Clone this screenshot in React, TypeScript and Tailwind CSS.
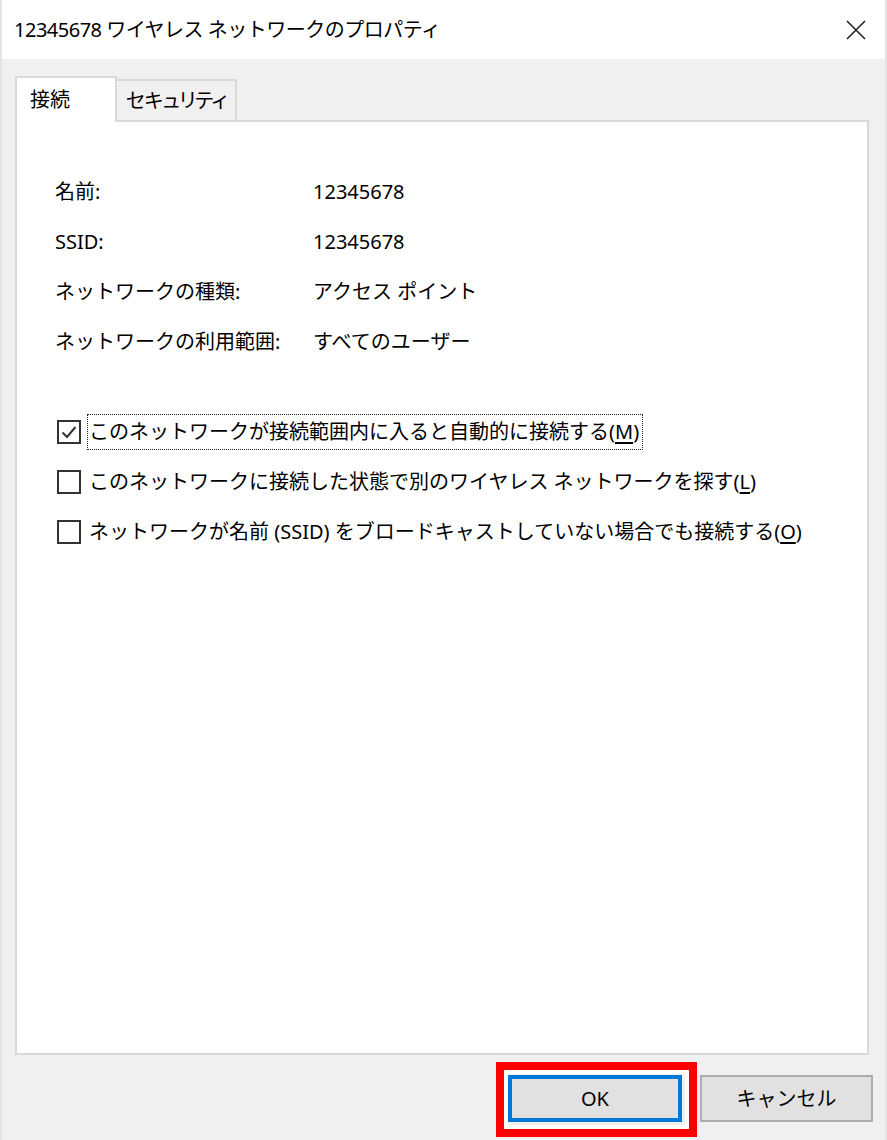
import React from "react";

const font = "font-['Noto_Sans','Noto_Sans_CJK_JP',sans-serif]";

function CheckRow({ checked, text, mn, focused }: { checked?: boolean; text: string; mn: string; focused?: boolean }) {
  return (
    <div className="flex items-center h-[50px]">
      <div className="w-[24px] h-[24px] border-2 border-[#333] bg-white flex items-center justify-center shrink-0">
        {checked && (
          <svg width="18" height="18" viewBox="0 0 18 18">
            <path d="M2.5 9.5 L7 14 L15.5 4" fill="none" stroke="#333" strokeWidth="2" />
          </svg>
        )}
      </div>
      <div
        className={
          "ml-[6px] pl-[1px] pr-[3px] leading-[34px] whitespace-nowrap " +
          (focused ? "border border-dotted border-[#222]" : "border border-transparent")
        }
      >
        {text}(<span className="underline underline-offset-[3px]">{mn}</span>)
      </div>
    </div>
  );
}

export default function App() {
  const rows: [string, string][] = [
    ["名前:", "12345678"],
    ["SSID:", "12345678"],
    ["ネットワークの種類:", "アクセス ポイント"],
    ["ネットワークの利用範囲:", "すべてのユーザー"],
  ];
  return (
    <div className={"w-[887px] h-[1140px] flex flex-col bg-white border-x-2 border-[#e3e3e3] text-[20px] text-black " + font}>
      <div className="h-[59px] bg-white flex items-center justify-between pl-[12px] pr-[18px]">
        <div className="tracking-[-0.5px] whitespace-nowrap">12345678 ワイヤレス ネットワークのプロパティ</div>
        <svg width="22" height="22" viewBox="0 0 22 22">
          <path d="M2 2 L20 20 M20 2 L2 20" stroke="#222" strokeWidth="1.6" fill="none" />
        </svg>
      </div>
      <div className="flex-1 bg-[#f0f0f0] flex flex-col pl-[13px] pr-[16px] pt-[17px]">
        <div className="flex items-end">
          <div className="relative z-10 -mb-[2px] h-[46px] w-[102px] bg-white border-2 border-b-0 border-[#d9d9d9] flex items-center pl-[13px] whitespace-nowrap">
            接続
          </div>
          <div className="h-[42px] w-[120px] bg-[#f0f0f0] border-2 border-b-0 border-l-0 border-[#d9d9d9] flex items-center pl-[9px] -mb-[1px] whitespace-nowrap [font-feature-settings:'palt'] tracking-[-0.5px]">
            セキュリティ
          </div>
        </div>
        <div className="h-[935px] bg-white border-2 border-[#d9d9d9] pl-[38px] pt-[45px]">
          {rows.map(([l, v]) => (
            <div key={l} className="flex h-[50px] items-center">
              <div className="w-[258px] whitespace-nowrap">{l}</div>
              <div className="whitespace-nowrap">{v}</div>
            </div>
          ))}
          <div className="mt-[40px] pl-[2px]">
            <CheckRow checked focused text="このネットワークが接続範囲内に入ると自動的に接続する" mn="M" />
            <CheckRow text="このネットワークに接続した状態で別のワイヤレス ネットワークを探す" mn="L" />
            <CheckRow text="ネットワークが名前 (SSID) をブロードキャストしていない場合でも接続する" mn="O" />
          </div>
        </div>
        <div className="flex justify-end gap-[18px] mt-[20px]">
          <div className="relative">
            <div className="w-[174px] h-[47px] bg-[#e1e1e1] border-4 border-[#0078d7] flex items-center justify-center">
              OK
            </div>
            <div className="absolute -left-[12px] -top-[13px] w-[201px] h-[75px] border-[8px] border-[#ff0000] shadow-[inset_0_0_0_4px_#ffffff] pointer-events-none" />
          </div>
          <div className="w-[173px] h-[47px] bg-[#e1e1e1] border-2 border-[#adadad] flex items-center justify-center mr-[-4px]">
            キャンセル
          </div>
        </div>
      </div>
    </div>
  );
}
